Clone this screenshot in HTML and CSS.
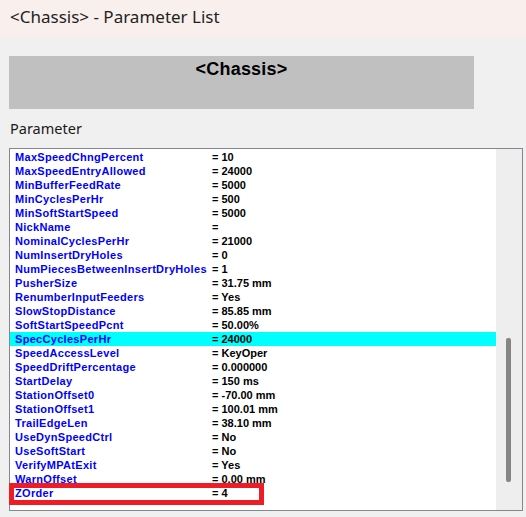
FILE: index.html
```html
<!DOCTYPE html>
<html>
<head>
<meta charset="utf-8">
<link rel="stylesheet" href="styles.css">
</head>
<body>
<div class="titlebar">&lt;Chassis&gt; - Parameter List</div>
<div class="content">
  <div class="header">&lt;Chassis&gt;</div>
  <div class="label">Parameter</div>
  <div class="listbox">
    <div class="rows">
      <div class="row"><span class="name">MaxSpeedChngPercent</span><span class="val">= 10</span></div>
      <div class="row"><span class="name">MaxSpeedEntryAllowed</span><span class="val">= 24000</span></div>
      <div class="row"><span class="name">MinBufferFeedRate</span><span class="val">= 5000</span></div>
      <div class="row"><span class="name">MinCyclesPerHr</span><span class="val">= 500</span></div>
      <div class="row"><span class="name">MinSoftStartSpeed</span><span class="val">= 5000</span></div>
      <div class="row"><span class="name">NickName</span><span class="val">=</span></div>
      <div class="row"><span class="name">NominalCyclesPerHr</span><span class="val">= 21000</span></div>
      <div class="row"><span class="name">NumInsertDryHoles</span><span class="val">= 0</span></div>
      <div class="row"><span class="name">NumPiecesBetweenInsertDryHoles</span><span class="val">= 1</span></div>
      <div class="row"><span class="name">PusherSize</span><span class="val">= 31.75 mm</span></div>
      <div class="row"><span class="name">RenumberInputFeeders</span><span class="val">= Yes</span></div>
      <div class="row"><span class="name">SlowStopDistance</span><span class="val">= 85.85 mm</span></div>
      <div class="row"><span class="name">SoftStartSpeedPcnt</span><span class="val">= 50.00%</span></div>
      <div class="row selected"><span class="name">SpecCyclesPerHr</span><span class="val">= 24000</span></div>
      <div class="row"><span class="name">SpeedAccessLevel</span><span class="val">= KeyOper</span></div>
      <div class="row"><span class="name">SpeedDriftPercentage</span><span class="val">= 0.000000</span></div>
      <div class="row"><span class="name">StartDelay</span><span class="val">= 150 ms</span></div>
      <div class="row"><span class="name">StationOffset0</span><span class="val">= -70.00 mm</span></div>
      <div class="row"><span class="name">StationOffset1</span><span class="val">= 100.01 mm</span></div>
      <div class="row"><span class="name">TrailEdgeLen</span><span class="val">= 38.10 mm</span></div>
      <div class="row"><span class="name">UseDynSpeedCtrl</span><span class="val">= No</span></div>
      <div class="row"><span class="name">UseSoftStart</span><span class="val">= No</span></div>
      <div class="row"><span class="name">VerifyMPAtExit</span><span class="val">= Yes</span></div>
      <div class="row"><span class="name">WarnOffset</span><span class="val">= 0.00 mm</span></div>
      <div class="row marked"><span class="name">ZOrder</span><span class="val">= 4</span><span class="mark"></span></div>
    </div>
    <div class="scrollbar"><div class="thumb"></div></div>
  </div>
</div>
</body>
</html>
```

FILE: styles.css
```css
html, body {
  margin: 0;
  padding: 0;
  background: #f0f0f0;
}
body {
  width: 526px;
  height: 517px;
  overflow: hidden;
}
.titlebar {
  height: 37px;
  box-sizing: border-box;
  background: #f9efec;
  padding: 4px 0 0 10px;
  font-family: "Noto Sans", "Open Sans", sans-serif;
  font-size: 17px;
  line-height: 25px;
  color: #1f1f1f;
}
.content {
  padding: 19px 0 0 9px;
}
.header {
  width: 465px;
  height: 53px;
  box-sizing: border-box;
  background: #c0c0c0;
  padding-top: 2px;
  text-align: center;
  font-family: "Liberation Sans", Arial, sans-serif;
  font-weight: bold;
  font-size: 18px;
  line-height: 22px;
  letter-spacing: 0.2px;
  color: #000;
}
.label {
  margin-top: 9px;
  padding-left: 1px;
  height: 30px;
  font-family: "Noto Sans", "Open Sans", sans-serif;
  font-size: 14.5px;
  line-height: 20px;
  color: #1a1a1a;
}
.listbox {
  width: 514px;
  height: 363px;
  box-sizing: border-box;
  border: 1px solid #828790;
  background: #ffffff;
  display: flex;
}
.rows {
  width: 486px;
  padding-top: 1px;
}
.row {
  position: relative;
  height: 14px;
  display: flex;
  padding-left: 5px;
  font-family: "Liberation Sans", Arial, sans-serif;
  font-weight: bold;
  font-size: 11px;
  line-height: 14px;
  white-space: nowrap;
}
.row.selected {
  background: #00ffff;
}
.name {
  width: 197px;
  color: #0000ff;
  letter-spacing: 0.3px;
}
.val {
  color: #000;
}
.mark {
  position: absolute;
  left: -1px;
  top: -3px;
  width: 255px;
  height: 22px;
  box-sizing: border-box;
  border: 5px solid #ee1c24;
}
.scrollbar {
  width: 26px;
  background: #eeeeee;
  position: relative;
}
.thumb {
  position: absolute;
  left: 10px;
  top: 189px;
  width: 5px;
  height: 144px;
  background: #858585;
  border-radius: 2px;
}
```
